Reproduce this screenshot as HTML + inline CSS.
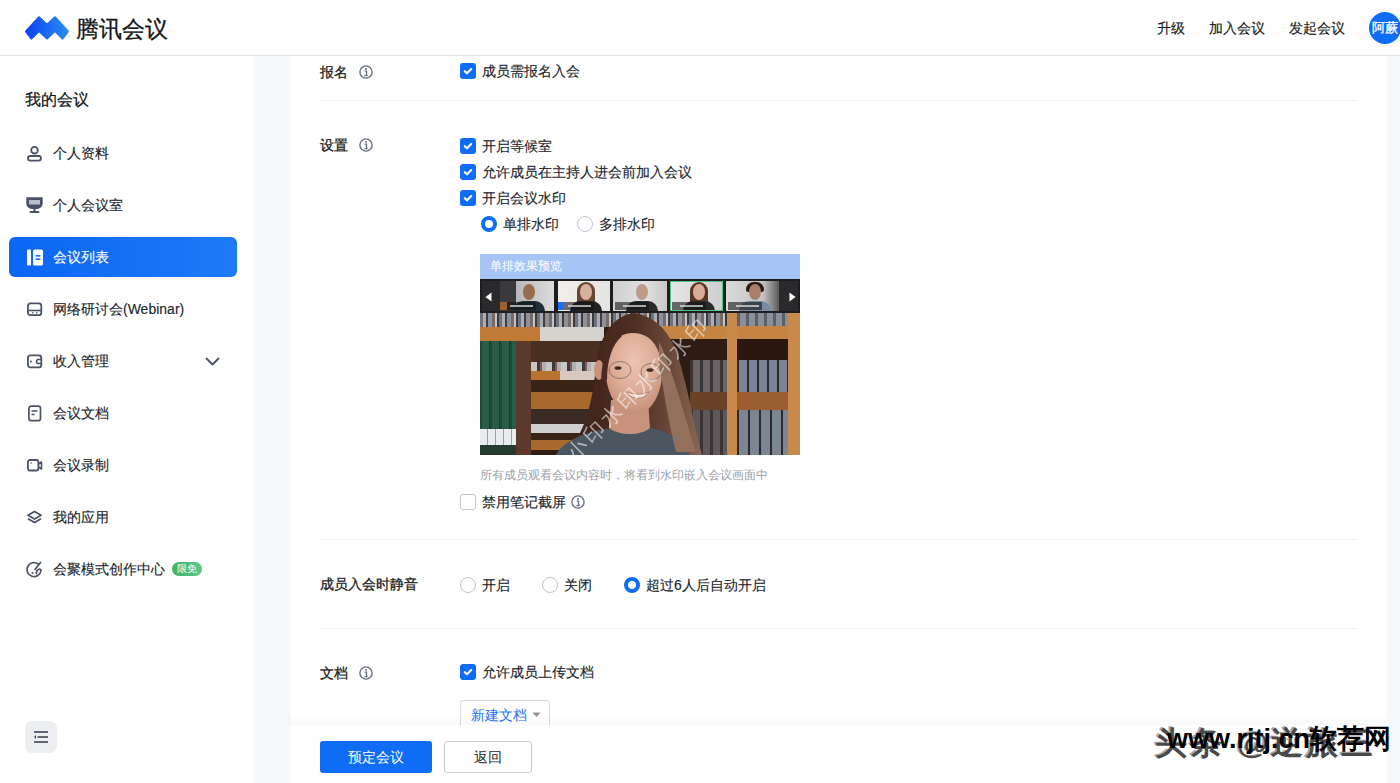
<!DOCTYPE html>
<html><head><meta charset="utf-8">
<style>
*{box-sizing:border-box;margin:0;padding:0}
html,body{width:1400px;height:783px;overflow:hidden;background:#f7f8fa;font-family:"Liberation Sans",sans-serif;color:#1c1f23}
.abs{position:absolute}
#header{position:absolute;left:0;top:0;width:1400px;height:56px;background:#fff;border-bottom:1px solid #dde0e7}
#sidebar{position:absolute;left:0;top:56px;width:253px;height:727px;background:#fff}
#gap{position:absolute;left:253px;top:56px;width:37px;height:727px;background:#f7f8fa;border-right:1px solid #f0f1f4}
#main{position:absolute;left:290px;top:56px;width:1097px;height:727px;background:#fff}
#rstrip{position:absolute;left:1387px;top:56px;width:13px;height:727px;background:#f7f8fa}
.t{position:absolute;white-space:nowrap;line-height:1}
.nav{position:absolute;left:0;width:253px;height:40px}
.nav .ic{position:absolute;left:26px;top:12px;width:17px;height:17px}
.nav .tx{position:absolute;left:53px;top:13px;font-size:14px;line-height:14px;color:#22262d;white-space:nowrap;-webkit-text-stroke:0.15px currentColor}
.cb{position:absolute;width:16px;height:16px;border-radius:3px;background:#0f6df5}
.cb svg{position:absolute;left:0;top:0}
.cbo{position:absolute;width:16px;height:16px;border-radius:3px;border:1px solid #c3c8d0;background:#fff}
.rad{position:absolute;width:16px;height:16px;border-radius:50%;border:4px solid #0f6df5;background:#fff}
.rado{position:absolute;width:16px;height:16px;border-radius:50%;border:1px solid #b9c3d1;background:#fff}
.lbl{position:absolute;font-size:14px;line-height:14px;color:#1c1f23;white-space:nowrap;-webkit-text-stroke:0.3px #1c1f23}
.opt{position:absolute;font-size:14px;line-height:14px;color:#22262d;white-space:nowrap;-webkit-text-stroke:0.15px #22262d}
.info{position:absolute;width:14px;height:14px}
.hr{position:absolute;left:320px;width:1037px;height:1px;background:#eceef2}
</style></head>
<body>
<div id="header">
  <svg class="abs" style="left:0;top:0" width="80" height="56" viewBox="0 0 80 56">
    <defs><linearGradient id="lg" x1="0" x2="1" y1="0" y2="0"><stop offset="0" stop-color="#0a44f0"/><stop offset="1" stop-color="#2a8cf5"/></linearGradient></defs>
    <polygon fill="url(#lg)" stroke="url(#lg)" stroke-width="2" stroke-linejoin="round" points="26,31.5 39,17.2 47,24.8 55,17.2 68,31.5 62.5,38.6 55,31 47,38.5 39,31 31.4,38.6"/>
  </svg>
  <div class="t" style="left:76px;top:18px;font-size:22.5px;line-height:23px;color:#15171a;-webkit-text-stroke:0.3px #15171a">腾讯会议</div>
  <div class="t" style="left:1157px;top:21px;font-size:14px;line-height:14px;color:#1c1f23;-webkit-text-stroke:0.2px #1c1f23">升级</div>
  <div class="t" style="left:1209px;top:21px;font-size:14px;line-height:14px;color:#1c1f23;-webkit-text-stroke:0.2px #1c1f23">加入会议</div>
  <div class="t" style="left:1289px;top:21px;font-size:14px;line-height:14px;color:#1c1f23;-webkit-text-stroke:0.2px #1c1f23">发起会议</div>
  <div class="abs" style="left:1369px;top:12px;width:32px;height:32px;border-radius:50%;background:#0f6df5"></div>
  <div class="t" style="left:1372px;top:21px;font-size:13px;line-height:13px;color:#fff;-webkit-text-stroke:0.3px #fff">阿蕨</div>
</div>
<div id="gap"></div>
<div id="main"></div>
<div id="rstrip"></div>
<div id="sidebar">
  <div class="t" style="left:25px;top:36px;font-size:16px;line-height:16px;color:#15171a;-webkit-text-stroke:0.25px #15171a">我的会议</div>
</div>
<div class="abs" style="left:9px;top:237px;width:228px;height:40px;border-radius:6px;background:linear-gradient(90deg,#0b66f3,#1f7af6)"></div>
<div class="nav" style="top:133px"><svg class="ic" viewBox="0 0 17 17"><circle cx="8.5" cy="5.2" r="3.3" fill="none" stroke="#4a5365" stroke-width="1.8"/><rect x="2" y="11" width="13" height="4.6" rx="2.3" fill="none" stroke="#4a5365" stroke-width="1.8"/></svg><div class="tx">个人资料</div></div>
<div class="nav" style="top:185px"><svg class="ic" viewBox="0 0 17 17"><path d="M0.3 0.3h16.4v6.2a6.5 5.5 0 0 1-6.5 5.5h-3.4A6.5 5.5 0 0 1 .3 6.5z" fill="#4a5365"/><rect x="3" y="3" width="11" height="4.5" fill="#b9bfca"/><rect x="7.5" y="12" width="2" height="2.5" fill="#4a5365"/><rect x="3.5" y="14" width="10" height="2" rx="1" fill="#4a5365"/></svg><div class="tx">个人会议室</div></div>
<div class="nav" style="top:237px"><svg class="ic" viewBox="0 0 17 17"><rect x="1" y="0.5" width="4" height="16" rx="1" fill="#fff"/><rect x="7" y="0.5" width="10" height="16" rx="1.5" fill="#fff"/><rect x="9.5" y="6" width="5" height="1.6" fill="#1a78f5"/><rect x="9.5" y="9.4" width="5" height="1.6" fill="#1a78f5"/></svg><div class="tx" style="color:#fff">会议列表</div></div>
<div class="nav" style="top:289px"><svg class="ic" viewBox="0 0 17 17"><rect x="1.9" y="2.4" width="13.4" height="11.8" rx="2.5" fill="none" stroke="#4a5365" stroke-width="1.8"/><line x1="2" y1="9.5" x2="15" y2="9.5" stroke="#4a5365" stroke-width="1.6"/><line x1="6" y1="11.8" x2="7.5" y2="11.8" stroke="#4a5365" stroke-width="1.2"/><line x1="10" y1="11.8" x2="11.5" y2="11.8" stroke="#4a5365" stroke-width="1.2"/></svg><div class="tx">网络研讨会(Webinar)</div></div>
<div class="nav" style="top:341px"><svg class="ic" viewBox="0 0 17 17"><rect x="1.9" y="2.4" width="13.4" height="12" rx="2.5" fill="none" stroke="#4a5365" stroke-width="1.8"/><path d="M15.5 6.5h-3a2 2 0 0 0 0 4h3" fill="none" stroke="#4a5365" stroke-width="1.6"/><circle cx="5" cy="8.5" r="1" fill="#4a5365"/></svg><div class="tx">收入管理</div>
  <svg class="abs" style="left:205px;top:16px" width="15" height="9" viewBox="0 0 15 9"><path d="M1.5 1.5l6 6 6-6" fill="none" stroke="#4a5365" stroke-width="1.8" stroke-linecap="round" stroke-linejoin="round"/></svg></div>
<div class="nav" style="top:393px"><svg class="ic" viewBox="0 0 17 17"><rect x="2.9" y="1.2" width="11.6" height="14.4" rx="2.2" fill="none" stroke="#4a5365" stroke-width="1.7"/><line x1="5.5" y1="6" x2="11.5" y2="6" stroke="#4a5365" stroke-width="1.5"/><line x1="5.5" y1="9.5" x2="8.5" y2="9.5" stroke="#4a5365" stroke-width="1.5"/></svg><div class="tx">会议文档</div></div>
<div class="nav" style="top:445px"><svg class="ic" viewBox="0 0 17 17"><rect x="1.9" y="3" width="10.5" height="10.5" rx="2" fill="none" stroke="#4a5365" stroke-width="1.8"/><path d="M12.5 7l3-2v7l-3-2" fill="none" stroke="#4a5365" stroke-width="1.6" stroke-linejoin="round"/><line x1="4.5" y1="6" x2="6" y2="6" stroke="#4a5365" stroke-width="1.2"/></svg><div class="tx">会议录制</div></div>
<div class="nav" style="top:497px"><svg class="ic" viewBox="0 0 17 17"><path d="M8.5 2.5l6.5 3.8-6.5 3.8-6.5-3.8z" fill="none" stroke="#4a5365" stroke-width="1.7" stroke-linejoin="round"/><path d="M2 9.8l6.5 3.8 6.5-3.8" fill="none" stroke="#4a5365" stroke-width="1.7" stroke-linejoin="round"/></svg><div class="tx">我的应用</div></div>
<div class="nav" style="top:549px"><svg class="ic" viewBox="0 0 17 17"><path d="M12.5 3.2A7 7 0 1 0 15 9.5c0-1.5-1.5-1.5-2.5-1-1.2.6-2.5 2-2 4" fill="none" stroke="#4a5365" stroke-width="1.7" stroke-linecap="round"/><path d="M14.5 1.5L9 8.5" stroke="#4a5365" stroke-width="1.7" stroke-linecap="round"/><circle cx="6.5" cy="12" r="1.1" fill="#4a5365"/></svg><div class="tx">会聚模式创作中心</div>
  <div class="abs" style="left:172px;top:13px;width:30px;height:14px;border-radius:7px;background:linear-gradient(90deg,#3db46c,#5cc585);color:#fff;font-size:10px;line-height:14px;text-align:center;white-space:nowrap">限免</div></div>
<div class="abs" style="left:25px;top:721px;width:32px;height:32px;border-radius:7px;background:#eceef2"></div>
<svg class="abs" style="left:25px;top:721px" width="32" height="32" viewBox="0 0 32 32"><line x1="9" y1="11" x2="23" y2="11" stroke="#3f4858" stroke-width="1.6"/><line x1="12.5" y1="16" x2="23" y2="16" stroke="#3f4858" stroke-width="1.6"/><line x1="9" y1="21" x2="23" y2="21" stroke="#3f4858" stroke-width="1.6"/><path d="M11 14l-2 2 2 2z" fill="#3f4858"/></svg>

<div class="lbl" style="left:320px;top:65px">报名</div>
<svg class="info" style="left:359px;top:65px" viewBox="0 0 14 14"><circle cx="7" cy="7" r="6.1" fill="none" stroke="#6a7282" stroke-width="1.4"/><circle cx="7" cy="3.9" r="1" fill="#6a7282"/><path d="M5.6 6.1h1.9v4.3M5.4 10.6h3.4" fill="none" stroke="#6a7282" stroke-width="1.4"/></svg>
<div class="cb" style="left:460px;top:63px"><svg width="16" height="16" viewBox="0 0 16 16"><path d="M4.8 8.2l2.2 2.1 4.2-4.3" fill="none" stroke="#fff" stroke-width="2.1" stroke-linecap="round" stroke-linejoin="round"/></svg></div>
<div class="opt" style="left:482px;top:64px">成员需报名入会</div>
<div class="hr" style="top:100px"></div>
<div class="lbl" style="left:320px;top:138px">设置</div>
<svg class="info" style="left:359px;top:138px" viewBox="0 0 14 14"><circle cx="7" cy="7" r="6.1" fill="none" stroke="#6a7282" stroke-width="1.4"/><circle cx="7" cy="3.9" r="1" fill="#6a7282"/><path d="M5.6 6.1h1.9v4.3M5.4 10.6h3.4" fill="none" stroke="#6a7282" stroke-width="1.4"/></svg>
<div class="cb" style="left:460px;top:138px"><svg width="16" height="16" viewBox="0 0 16 16"><path d="M4.8 8.2l2.2 2.1 4.2-4.3" fill="none" stroke="#fff" stroke-width="2.1" stroke-linecap="round" stroke-linejoin="round"/></svg></div>
<div class="opt" style="left:482px;top:139px">开启等候室</div>
<div class="cb" style="left:460px;top:164px"><svg width="16" height="16" viewBox="0 0 16 16"><path d="M4.8 8.2l2.2 2.1 4.2-4.3" fill="none" stroke="#fff" stroke-width="2.1" stroke-linecap="round" stroke-linejoin="round"/></svg></div>
<div class="opt" style="left:482px;top:165px">允许成员在主持人进会前加入会议</div>
<div class="cb" style="left:460px;top:190px"><svg width="16" height="16" viewBox="0 0 16 16"><path d="M4.8 8.2l2.2 2.1 4.2-4.3" fill="none" stroke="#fff" stroke-width="2.1" stroke-linecap="round" stroke-linejoin="round"/></svg></div>
<div class="opt" style="left:482px;top:191px">开启会议水印</div>
<div class="rad" style="left:481px;top:216px"></div>
<div class="opt" style="left:503px;top:217px">单排水印</div>
<div class="rado" style="left:577px;top:216px"></div>
<div class="opt" style="left:599px;top:217px">多排水印</div>
<div id="preview" class="abs" style="left:480px;top:254px;width:320px;height:201px;background:#3a2a20;overflow:hidden"><div style="position:absolute;left:0;top:0;width:320px;height:201px;filter:blur(0.5px)"><div style="position:absolute;left:0px;top:59px;width:320px;height:142px;background:#2f1e16;"></div><div style="position:absolute;left:0px;top:59px;width:320px;height:14px;background:repeating-linear-gradient(90deg,#6e737e 0 3px,#a9aeb8 3px 6px,#4a3a34 6px 8px,#8a92a0 8px 12px,#7a6a62 12px 15px,#c0c4cc 15px 17px,#3e3a3a 17px 19px);"></div><div style="position:absolute;left:0px;top:73px;width:60px;height:14px;background:#c07a36;"></div><div style="position:absolute;left:60px;top:73px;width:64px;height:14px;background:#d6d2ce;"></div><div style="position:absolute;left:180px;top:72px;width:140px;height:13px;background:#c58443;"></div><div style="position:absolute;left:0px;top:87px;width:36px;height:88px;background:repeating-linear-gradient(90deg,#1f4a3a 0 2px,#2a5c48 2px 9px,#1a3c30 9px 10px);"></div><div style="position:absolute;left:0px;top:175px;width:36px;height:16px;background:repeating-linear-gradient(90deg,#e8ecef 0 7px,#9aa0a4 7px 8px);"></div><div style="position:absolute;left:0px;top:191px;width:36px;height:10px;background:#263a32;"></div><div style="position:absolute;left:36px;top:87px;width:15px;height:114px;background:#5b3a2b;"></div><div style="position:absolute;left:51px;top:87px;width:69px;height:21px;background:#4a3020;"></div><div style="position:absolute;left:51px;top:108px;width:69px;height:9px;background:repeating-linear-gradient(90deg,#c8c6c4 0 6px,#3a3a44 6px 9px,#8a5a4a 9px 11px,#b0b0b4 11px 15px);"></div><div style="position:absolute;left:51px;top:117px;width:29px;height:9px;background:#b8742f;"></div><div style="position:absolute;left:80px;top:117px;width:35px;height:9px;background:#d8c8c0;"></div><div style="position:absolute;left:51px;top:126px;width:69px;height:12px;background:#3a2418;"></div><div style="position:absolute;left:51px;top:138px;width:64px;height:17px;background:#a86a2c;"></div><div style="position:absolute;left:51px;top:155px;width:69px;height:15px;background:#3a2a24;"></div><div style="position:absolute;left:51px;top:170px;width:59px;height:9px;background:#d0d0d0;"></div><div style="position:absolute;left:51px;top:179px;width:69px;height:7px;background:#3a2418;"></div><div style="position:absolute;left:51px;top:186px;width:59px;height:10px;background:#a86a2c;"></div><div style="position:absolute;left:180px;top:85px;width:67px;height:116px;background:#2e1c14;"></div><div style="position:absolute;left:210px;top:106px;width:37px;height:32px;background:repeating-linear-gradient(90deg,#3a3436 0 3px,#6a6466 3px 10px);"></div><div style="position:absolute;left:210px;top:138px;width:37px;height:18px;background:#6a4228;"></div><div style="position:absolute;left:210px;top:156px;width:37px;height:45px;background:repeating-linear-gradient(90deg,#3a3436 0 3px,#5e585a 3px 10px);"></div><div style="position:absolute;left:247px;top:59px;width:10px;height:142px;background:#c8894a;"></div><div style="position:absolute;left:308px;top:59px;width:12px;height:142px;background:#c8894a;"></div><div style="position:absolute;left:257px;top:59px;width:51px;height:13px;background:repeating-linear-gradient(90deg,#5a5f68 0 3px,#8a909a 3px 9px);"></div><div style="position:absolute;left:257px;top:72px;width:51px;height:13px;background:#c58443;"></div><div style="position:absolute;left:257px;top:85px;width:51px;height:21px;background:#2a1810;"></div><div style="position:absolute;left:257px;top:106px;width:51px;height:32px;background:repeating-linear-gradient(90deg,#2a2a30 0 2px,#7a8496 2px 10px);"></div><div style="position:absolute;left:257px;top:138px;width:51px;height:18px;background:#9a5e30;"></div><div style="position:absolute;left:257px;top:156px;width:51px;height:45px;background:repeating-linear-gradient(90deg,#2a2a30 0 2px,#7c8592 2px 11px);"></div><svg style="position:absolute;left:0;top:0" width="320" height="201" viewBox="480 254 320 201">
<defs>
<linearGradient id="hairg" x1="0" x2="1" y1="0" y2="0"><stop offset="0" stop-color="#3a2218"/><stop offset="0.5" stop-color="#4e2e22"/><stop offset="0.8" stop-color="#6e4c3c"/><stop offset="1" stop-color="#8a6856"/></linearGradient>
<radialGradient id="faceg" cx="0.5" cy="0.35" r="0.65"><stop offset="0" stop-color="#ecc4b0"/><stop offset="0.6" stop-color="#dcab95"/><stop offset="1" stop-color="#c48e78"/></radialGradient>
<filter id="bl"><feGaussianBlur stdDeviation="0.7"/></filter>
</defs>
<g filter="url(#bl)">
<path d="M635,313 C612,315 600,338 597,360 C593,392 590,415 578,437 L566,455 L702,455 C695,430 690,400 684,378 C677,348 668,320 635,313 Z" fill="url(#hairg)"/>
<path d="M556,455 C562,442 585,431 612,428 L652,428 C668,432 682,440 690,455 Z" fill="#4b5661"/>
<path d="M611,400 L648,400 L650,428 C640,436 620,436 609,428 Z" fill="#c9927d"/>
<ellipse cx="599" cy="370" rx="5" ry="10" fill="#c9927d"/>
<path d="M633,333 C652,333 662,350 662,372 C662,395 650,414 636,415 C620,415 606,396 606,372 C606,350 614,333 633,333 Z" fill="url(#faceg)"/>
<path d="M659,342 C670,362 683,410 696,452 L676,452 C668,420 664,392 659,364 Z" fill="#93705c"/><path d="M615,336 C606,345 602,360 601,380 L607,380 C607,360 612,345 622,336 Z" fill="#4a2c20"/>
<ellipse cx="620" cy="370" rx="11" ry="8.5" fill="none" stroke="rgba(80,70,70,.55)" stroke-width="1"/>
<ellipse cx="651" cy="372" rx="10" ry="8.5" fill="none" stroke="rgba(80,70,70,.55)" stroke-width="1"/>
<ellipse cx="618" cy="368" rx="3.5" ry="1.8" fill="#3a2a26"/>
<ellipse cx="650" cy="370" rx="3.5" ry="1.8" fill="#3a2a26"/>
<path d="M625,391 C632,400 643,401 649,392 C641,395 633,395 625,391 Z" fill="#efe0d6" stroke="#b07060" stroke-width="0.8"/>
</g>
<text x="0" y="0" transform="translate(575,462) rotate(-45)" font-size="21" fill="rgba(255,255,255,.55)" letter-spacing="3" style="font-family:'Liberation Sans',sans-serif">小印水印水印水印</text>
</svg></div><div style="position:absolute;left:0px;top:0px;width:320px;height:25px;background:#a7c5f4;"></div><div style="position:absolute;left:10px;top:6px;font-size:12px;line-height:12px;color:#fff;white-space:nowrap">单排效果预览</div><div style="position:absolute;left:0px;top:25px;width:320px;height:34px;background:#1d1d1f;"></div><div style="position:absolute;left:2px;top:27px;width:18px;height:30px;background:#2a2a2c;"></div><div style="position:absolute;left:299px;top:27px;width:19px;height:30px;background:#2a2a2c;"></div><svg style="position:absolute;left:5px;top:38px" width="7" height="10" viewBox="0 0 7 10"><path d="M6.5 0.5v9L0.5 5z" fill="#fff"/></svg><svg style="position:absolute;left:309px;top:38px" width="7" height="10" viewBox="0 0 7 10"><path d="M0.5 0.5v9L6.5 5z" fill="#fff"/></svg><div style="position:absolute;left:20px;top:27px;width:54px;height:30px;background:linear-gradient(90deg,#3a3a3c 0 30%,#b8b8ba 30%,#dcdcdc 100%);"></div><div style="position:absolute;left:33.0px;top:47px;width:32px;height:10px;border-radius:10px 10px 0 0;background:#1f3038"></div><div style="position:absolute;left:43.0px;top:30px;width:12px;height:16px;border-radius:50%;background:#9a6a50"></div><div style="position:absolute;left:22px;top:48px;width:34px;height:8px;background:rgba(20,20,20,.6);"></div><div style="position:absolute;left:30px;top:51px;width:23px;height:2px;background:rgba(230,230,230,.7);"></div><div style="position:absolute;left:78px;top:27px;width:52px;height:30px;background:linear-gradient(90deg,#f0efec,#e6e4e0);"></div><div style="position:absolute;left:97.0px;top:28px;width:18px;height:24px;border-radius:9px 9px 3px 3px;background:#6a4632"></div><div style="position:absolute;left:90.0px;top:47px;width:32px;height:10px;border-radius:10px 10px 0 0;background:#222"></div><div style="position:absolute;left:100.0px;top:30px;width:12px;height:16px;border-radius:50%;background:#d8b0a0"></div><div style="position:absolute;left:80px;top:48px;width:34px;height:8px;background:rgba(20,20,20,.6);"></div><div style="position:absolute;left:88px;top:51px;width:23px;height:2px;background:rgba(230,230,230,.7);"></div><div style="position:absolute;left:133px;top:27px;width:54px;height:30px;background:linear-gradient(90deg,#d0d0d0,#e0e0e0 60%,#c8c8c8);"></div><div style="position:absolute;left:146.0px;top:47px;width:32px;height:10px;border-radius:10px 10px 0 0;background:#2a2a2a"></div><div style="position:absolute;left:156.0px;top:30px;width:12px;height:16px;border-radius:50%;background:#c09a86"></div><div style="position:absolute;left:135px;top:48px;width:34px;height:8px;background:rgba(20,20,20,.6);"></div><div style="position:absolute;left:143px;top:51px;width:23px;height:2px;background:rgba(230,230,230,.7);"></div><div style="position:absolute;left:190px;top:27px;width:53px;height:30px;background:linear-gradient(90deg,#e6e6e6,#cfcfcf);"></div><div style="position:absolute;left:209.5px;top:28px;width:18px;height:24px;border-radius:9px 9px 3px 3px;background:#5a3424"></div><div style="position:absolute;left:202.5px;top:47px;width:32px;height:10px;border-radius:10px 10px 0 0;background:#2a2a2a"></div><div style="position:absolute;left:212.5px;top:30px;width:12px;height:16px;border-radius:50%;background:#d8ad98"></div><div style="position:absolute;left:192px;top:48px;width:34px;height:8px;background:rgba(20,20,20,.6);"></div><div style="position:absolute;left:200px;top:51px;width:23px;height:2px;background:rgba(230,230,230,.7);"></div><div style="position:absolute;left:190px;top:27px;width:53px;height:30px;border:1px solid #4cc585"></div><div style="position:absolute;left:246px;top:27px;width:53px;height:30px;background:linear-gradient(90deg,#dadada,#c4c4c4 70%,#5a5a5a);"></div><div style="position:absolute;left:265.5px;top:28px;width:18px;height:10px;border-radius:9px 9px 3px 3px;background:#2a1a14"></div><div style="position:absolute;left:258.5px;top:47px;width:32px;height:10px;border-radius:10px 10px 0 0;background:#7a8aa0"></div><div style="position:absolute;left:268.5px;top:30px;width:12px;height:16px;border-radius:50%;background:#a8806a"></div><div style="position:absolute;left:248px;top:48px;width:34px;height:8px;background:rgba(20,20,20,.6);"></div><div style="position:absolute;left:256px;top:51px;width:23px;height:2px;background:rgba(230,230,230,.7);"></div><div style="position:absolute;left:78px;top:48px;width:5px;height:8px;background:#1a6ef5;"></div><div style="position:absolute;left:20px;top:48px;width:7px;height:8px;background:#a0602a;"></div></div>
<div class="t" style="left:480px;top:469px;font-size:12px;line-height:12px;color:#9aa0aa">所有成员观看会议内容时，将看到水印嵌入会议画面中</div>
<div class="cbo" style="left:460px;top:494px"></div>
<div class="opt" style="left:482px;top:495px">禁用笔记截屏</div>
<svg class="info" style="left:571px;top:495px" viewBox="0 0 14 14"><circle cx="7" cy="7" r="6.1" fill="none" stroke="#6a7282" stroke-width="1.4"/><circle cx="7" cy="3.9" r="1" fill="#6a7282"/><path d="M5.6 6.1h1.9v4.3M5.4 10.6h3.4" fill="none" stroke="#6a7282" stroke-width="1.4"/></svg>
<div class="hr" style="top:539px"></div>
<div class="lbl" style="left:320px;top:577px">成员入会时静音</div>
<div class="rado" style="left:460px;top:577px"></div>
<div class="opt" style="left:482px;top:578px">开启</div>
<div class="rado" style="left:542px;top:577px"></div>
<div class="opt" style="left:564px;top:578px">关闭</div>
<div class="rad" style="left:624px;top:577px"></div>
<div class="opt" style="left:646px;top:578px">超过6人后自动开启</div>
<div class="hr" style="top:628px"></div>
<div class="lbl" style="left:320px;top:666px">文档</div>
<svg class="info" style="left:359px;top:666px" viewBox="0 0 14 14"><circle cx="7" cy="7" r="6.1" fill="none" stroke="#6a7282" stroke-width="1.4"/><circle cx="7" cy="3.9" r="1" fill="#6a7282"/><path d="M5.6 6.1h1.9v4.3M5.4 10.6h3.4" fill="none" stroke="#6a7282" stroke-width="1.4"/></svg>
<div class="cb" style="left:460px;top:664px"><svg width="16" height="16" viewBox="0 0 16 16"><path d="M4.8 8.2l2.2 2.1 4.2-4.3" fill="none" stroke="#fff" stroke-width="2.1" stroke-linecap="round" stroke-linejoin="round"/></svg></div>
<div class="opt" style="left:482px;top:665px">允许成员上传文档</div>
<div class="abs" style="left:460px;top:700px;width:90px;height:34px;border:1px solid #d5d9e0;border-radius:3px;background:#fff"></div>
<div class="t" style="left:471px;top:708px;font-size:14px;line-height:14px;color:#1f6ff0">新建文档</div>
<svg class="abs" style="left:532px;top:712px" width="9" height="6" viewBox="0 0 9 6"><path d="M0.5 0.5h8l-4 4.5z" fill="#8a909a"/></svg>
<div class="abs" style="left:290px;top:715px;width:1097px;height:10px;background:linear-gradient(180deg,rgba(0,0,0,0),rgba(0,0,0,.025))"></div><div id="footer" class="abs" style="left:290px;top:725px;width:1097px;height:58px;background:#fff"></div>
<div class="abs" style="left:320px;top:741px;width:112px;height:32px;border-radius:3px;background:#0f6df5"></div>
<div class="t" style="left:348px;top:750px;font-size:14px;line-height:14px;color:#fff">预定会议</div>
<div class="abs" style="left:444px;top:741px;width:88px;height:32px;border-radius:3px;border:1px solid #c8ccd4;background:#fff"></div>
<div class="t" style="left:474px;top:750px;font-size:14px;line-height:14px;color:#1c1f23">返回</div>
<div class="t" style="left:1155px;top:727px;font-size:32px;line-height:32px;font-weight:700;color:#4a4a4a;letter-spacing:3px;text-shadow:2px 3px 0 #fff,-2px -1px 0 #aaa">头条 @逆旅三</div>
<div class="t" style="left:1167px;top:726px;font-size:27px;line-height:27px;font-weight:700;color:#000">www.rjtj.cn软荐网</div>
</body></html>
